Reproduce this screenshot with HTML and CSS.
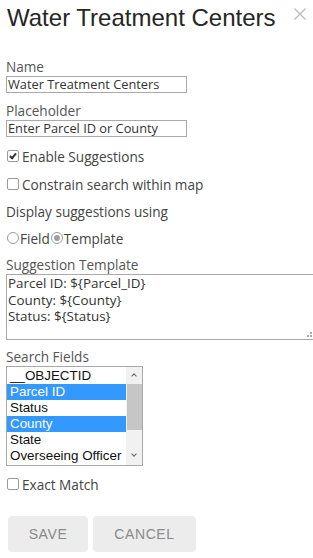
FILE: index.html
```html
<!DOCTYPE html>
<html lang="en">
  <head>
    <meta charset="UTF-8" />
    <title>Search Settings</title>
    <link rel="stylesheet" href="styles.css">
  </head>
  <body>
    <div class="panel">
      <div class="header">
        <h1>Water Treatment Centers</h1>
        <span class="close">
          <svg width="12" height="12" viewBox="0 0 12 12"><path d="M0.5 0.5L11.5 11.5M11.5 0.5L0.5 11.5" stroke="#bcbcbc" stroke-width="1.4" fill="none"/></svg>
        </span>
      </div>

      <div class="field first">
        <label class="label">Name</label>
        <div class="text-input">Water Treatment Centers</div>
      </div>

      <div class="field">
        <label class="label">Placeholder</label>
        <div class="text-input">Enter Parcel ID or County</div>
      </div>

      <div class="check-row enable">
        <span class="box checked"></span>Enable Suggestions
      </div>
      <div class="check-row">
        <span class="box"></span>Constrain search within map
      </div>

      <div class="plain-row">Display suggestions using</div>

      <div class="radio-row">
        <span class="radio"></span>Field<span class="radio on"></span>Template
      </div>

      <div class="field template">
        <label class="label">Suggestion Template</label>
        <div class="textarea">Parcel ID: ${Parcel_ID}
County: ${County}
Status: ${Status}<span class="grip"></span></div>
      </div>

      <div class="field search">
        <label class="label">Search Fields</label>
        <div class="listbox">
          <div class="options">
            <div class="opt">__OBJECTID</div>
            <div class="opt sel">Parcel ID</div>
            <div class="opt">Status</div>
            <div class="opt sel">County</div>
            <div class="opt">State</div>
            <div class="opt">Overseeing Officer</div>
          </div>
          <div class="scroll">
            <span class="arrow up"></span>
            <span class="thumb"></span>
            <span class="arrow down"></span>
          </div>
        </div>
      </div>

      <div class="check-row exact">
        <span class="box"></span>Exact Match
      </div>

      <div class="buttons">
        <button class="btn save">SAVE</button>
        <button class="btn cancel">CANCEL</button>
      </div>
    </div>
  </body>
</html>
```

FILE: styles.css
```css
body {
  margin: 0;
  padding: 0 0 0 6px;
  background: #fff;
  font-family: "Open Sans", "DejaVu Sans", sans-serif;
  font-size: 13.6px;
  color: #444;
  overflow: hidden;
}
.panel {
  width: 320px;
}
.header {
  display: flex;
  align-items: flex-start;
  justify-content: space-between;
  width: 300px;
  height: 40px;
}
h1 {
  margin: 4px 0 0 1px;
  font-family: "Liberation Sans", Arial, sans-serif;
  font-weight: normal;
  font-size: 24px;
  line-height: 28px;
  color: #262626;
  white-space: nowrap;
}
.close {
  margin-top: 8px;
  width: 12px;
  height: 12px;
}
.close svg {
  display: block;
}
.field {
  margin-top: 9px;
}
.field.first {
  margin-top: 18px;
}
.label {
  display: block;
  color: #555;
  height: 18px;
  line-height: 18px;
}
.text-input {
  width: 181px;
  height: 17px;
  box-shadow: inset 0 0 0 1px #a9a9a9;
  line-height: 17px;
  font-size: 12.8px;
  color: #333;
  padding-left: 2px;
  box-sizing: border-box;
  white-space: nowrap;
}
.check-row,
.radio-row,
.plain-row {
  display: flex;
  align-items: center;
  height: 18px;
  margin-top: 10px;
  color: #444;
}
.plain-row,
.radio-row {
  margin-top: 9px;
}
.box {
  width: 10px;
  height: 10px;
  border: 1px solid #9a9a9a;
  border-radius: 2px;
  margin: 0 3px 0 1px;
  position: relative;
  background: #fff;
}
.box.checked::after {
  content: "";
  position: absolute;
  left: 3px;
  top: 1px;
  width: 2px;
  height: 5px;
  border: solid #333;
  border-width: 0 2px 2px 0;
  transform: rotate(40deg);
}
.radio {
  width: 10px;
  height: 10px;
  border: 1px solid #9a9a9a;
  border-radius: 50%;
  margin: 0 1px 0 1px;
  position: relative;
  background: #fff;
}
.radio.on::after {
  content: "";
  position: absolute;
  left: 2px;
  top: 2px;
  width: 6px;
  height: 6px;
  border-radius: 50%;
  background: #a0a0a0;
}
.field.template {
  margin-top: 9px;
}
.textarea {
  position: relative;
  box-sizing: border-box;
  height: 66px;
  width: 320px;
  border: 1px solid #a9a9a9;
  border-right: none;
  white-space: pre;
  color: #333;
  font-size: 13.4px;
  line-height: 16.5px;
  padding-left: 1px;
}
.grip {
  position: absolute;
  right: 14px;
  bottom: 2px;
  width: 5px;
  height: 5px;
  background:
    linear-gradient(#aaa, #aaa) 3px 3px / 2px 2px no-repeat,
    linear-gradient(#aaa, #aaa) 0 3px / 2px 2px no-repeat,
    linear-gradient(#aaa, #aaa) 3px 0 / 2px 2px no-repeat;
}
.field.search {
  margin-top: 8px;
}
.listbox {
  display: flex;
  box-sizing: border-box;
  width: 137px;
  height: 100px;
  border: 1px solid #a9a9a9;
  font-family: "Liberation Sans", Arial, sans-serif;
  font-size: 13.4px;
  color: #111;
}
.options {
  flex: 1;
  padding-top: 1px;
}
.opt {
  height: 16px;
  line-height: 16px;
  padding-left: 3px;
  white-space: nowrap;
  overflow: hidden;
}
.opt.sel {
  background: #3399ff;
  color: #fff;
}
.scroll {
  width: 16px;
  background: #f1f1f1;
  display: flex;
  flex-direction: column;
  align-items: center;
}
.arrow {
  height: 17px;
  width: 16px;
  position: relative;
}
.arrow::after {
  content: "";
  position: absolute;
  left: 6px;
  width: 3px;
  height: 3px;
  border: solid #666;
  border-width: 1.5px 0 0 1.5px;
}
.arrow.up::after {
  top: 7px;
  transform: rotate(45deg);
}
.arrow.down {
  margin-top: auto;
}
.arrow.down::after {
  top: 4px;
  transform: rotate(225deg);
}
.thumb {
  width: 15px;
  height: 46px;
  background: #c6c6c6;
}
.check-row.exact {
  margin-top: 9px;
}
.buttons {
  display: flex;
  gap: 5px;
  margin-top: 23px;
  margin-left: 2px;
}
.btn {
  height: 36px;
  border: none;
  border-radius: 4px;
  background: #ececec;
  color: #8a8a8a;
  font-family: "Liberation Sans", Arial, sans-serif;
  font-size: 14px;
  letter-spacing: 0.6px;
  cursor: pointer;
}
.save {
  width: 80px;
}
.cancel {
  width: 103px;
}
```
